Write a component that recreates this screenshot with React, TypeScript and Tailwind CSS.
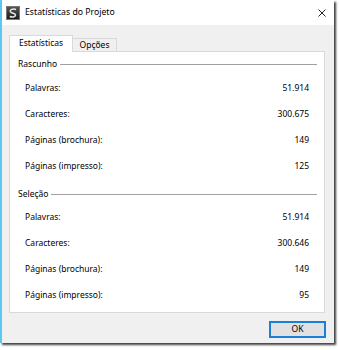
import React from "react";

const rows1 = [
  ["Palavras:", "51.914"],
  ["Caracteres:", "300.675"],
  ["Páginas (brochura):", "149"],
  ["Páginas (impresso):", "125"],
];
const rows2 = [
  ["Palavras:", "51.914"],
  ["Caracteres:", "300.646"],
  ["Páginas (brochura):", "149"],
  ["Páginas (impresso):", "95"],
];

function Group({ title, rows, first }: { title: string; rows: string[][]; first?: boolean }) {
  return (
    <div className="flex flex-col">
      <div className="flex items-center h-[12px]">
        <span className="pr-[3px]">{title}</span>
        <div className="flex-1 h-px bg-[#a0a0a0] mr-[7px]" />
      </div>
      <div className={first ? "flex flex-col pl-[7px] pr-[15px] pt-[5px]" : "flex flex-col pl-[7px] pr-[15px] pt-[4px]"}>
        {rows.map(([l, v]) => (
          <div key={l} className="flex justify-between items-center h-[26px]">
            <span>{l}</span>
            <span>{v}</span>
          </div>
        ))}
      </div>
    </div>
  );
}

export default function App() {
  return (
    <div
      className="w-[339px] h-[350px] bg-white text-[8.5px] text-black leading-none"
      style={{ fontFamily: '"Noto Sans", "Open Sans", sans-serif' }}
    >
      <div className="w-[334px] h-[343px] flex flex-col bg-[#f0f0f0] border-l-2 border-[#5cc8f2] shadow-[2px_2px_2px_rgba(0,0,0,0.75)]">
        <div className="h-[25px] bg-white flex items-center shrink-0">
          <div className="ml-[4px] w-[14px] h-[14px] bg-gradient-to-b from-[#555] to-[#1c1c1c] border border-[#777] flex items-center justify-center">
            <svg width="10" height="10" viewBox="0 0 10 10">
              <path d="M8 1.5 C5 0.5 1.5 1.5 2.5 3.8 C3.5 5.8 7.8 4.8 7.5 7.2 C7.2 9.5 3.5 9.2 1.8 8.5" stroke="#e8e8e8" strokeWidth="1.5" fill="none" />
            </svg>
          </div>
          <span className="ml-[5px] text-[8.7px] text-black">Estatísticas do Projeto</span>
          <div className="flex-1" />
          <svg width="8" height="8" viewBox="0 0 8 8" className="mr-[8px]">
            <path d="M0.5 0.5 L7.5 7.5 M7.5 0.5 L0.5 7.5" stroke="#222" strokeWidth="1" />
          </svg>
        </div>
        <div className="flex flex-col pl-[7px] pt-[10px]">
          <div className="flex items-end h-[17px] relative z-10">
            <div className="h-[17px] w-[64px] bg-white border border-[#d9d9d9] border-b-0 flex items-center justify-center pb-[1px]">
              Estatísticas
            </div>
            <div className="h-[13px] w-[44px] mb-px bg-[#f0f0f0] border border-l-0 border-[#d9d9d9] border-b-0 flex items-center justify-center">
              Opções
            </div>
          </div>
          <div className="-mt-px h-[262px] w-[316px] bg-white border border-[#d9d9d9] flex flex-col pl-[8px] pt-[6px] gap-[9px]">
            <Group title="Rascunho" rows={rows1} first />
            <Group title="Seleção" rows={rows2} />
          </div>
          <div className="flex justify-end pt-[8px] pr-[8px]">
            <button className="w-[57px] h-[17px] bg-[#e1e1e1] border-2 border-[#1a7fd8] flex items-center justify-center text-[8.5px] text-black">
              OK
            </button>
          </div>
        </div>
      </div>
    </div>
  );
}
